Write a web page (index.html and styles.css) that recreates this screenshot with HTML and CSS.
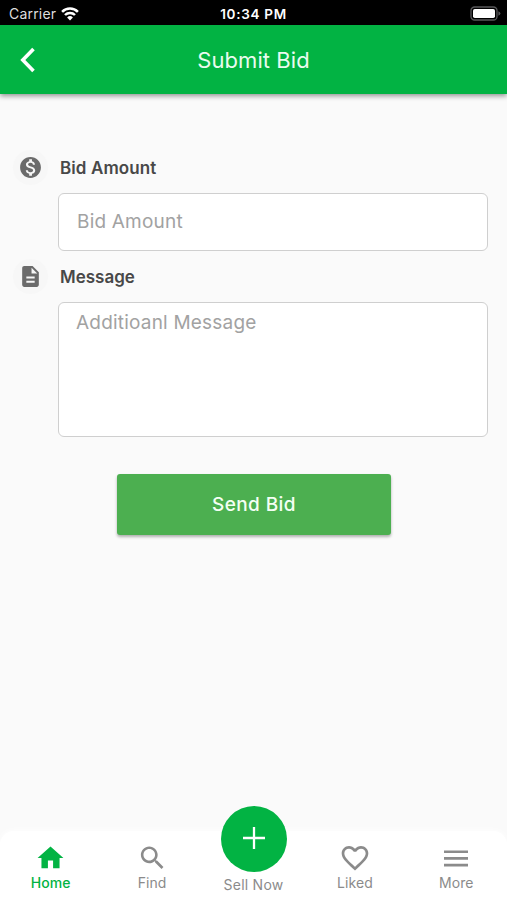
FILE: index.html
```html
<!DOCTYPE html>
<html lang="en">
<head>
<meta charset="utf-8">
<title>Submit Bid</title>
<link rel="stylesheet" href="styles.css">
</head>
<body>
<div class="status">
  <div class="carrier"><span class="carrier-name">Carrier</span>
    <svg class="wifi" viewBox="0 0 18 14" width="18" height="14"><path d="M1.1 4.900a11 11 0 0 1 15.800 0M4 8a7 7 0 0 1 10 0" fill="none" stroke="#fff" stroke-width="2.500"/><path d="M9 13.500 6.100 10.500a4.100 4.100 0 0 1 5.800 0z" fill="#fff"/></svg>
  </div>
  <span class="time">10:34 PM</span>
  <svg class="battery" viewBox="0 0 31 15" width="31" height="15"><rect x="1" y="1" width="26" height="13" rx="3.6" fill="none" stroke="#58585a" stroke-width="1.3"/><rect x="3" y="3" width="22" height="9" rx="1.8" fill="#fff"/><path d="M28.4 5.2q2 .8 2 2.3t-2 2.3z" fill="#58585a"/></svg>
</div>
<header class="appbar">
  <svg class="back" viewBox="0 0 16 26" width="16" height="26"><path d="M13.500 2 2.800 13l10.700 11" fill="none" stroke="#fff" stroke-width="3.600"/></svg>
  <h1 class="title">Submit Bid</h1>
</header>
<main class="form">
  <div class="label">
    <span class="badge"><svg viewBox="0 0 24 24" width="25" height="25"><path d="M12 2C6.48 2 2 6.48 2 12s4.48 10 10 10 10-4.480 10-10S17.520 2 12 2zm1.410 16.090V20h-2.670v-1.930c-1.710-.36-3.160-1.460-3.270-3.400h1.960c.1 1.050.82 1.870 2.650 1.870 1.960 0 2.400-.98 2.400-1.590 0-.83-.44-1.610-2.670-2.140-2.480-.6-4.180-1.620-4.180-3.670 0-1.720 1.390-2.840 3.110-3.210V4h2.670v1.950c1.860.45 2.790 1.860 2.850 3.390H14.300c-.05-1.110-.64-1.870-2.220-1.870-1.500 0-2.400.68-2.400 1.640 0 .84.65 1.390 2.670 1.910s4.180 1.390 4.180 3.910c-.01 1.830-1.380 2.830-3.120 3.160z" fill="#6b6b6b"/></svg></span>
    <span>Bid Amount</span>
  </div>
  <div class="field"><span>Bid Amount</span></div>
  <div class="label label-message">
    <span class="badge"><svg viewBox="0 0 24 24" width="25" height="25"><path d="M14 2H6c-1.100 0-1.990.9-1.990 2L4 20c0 1.100.89 2 1.990 2H18c1.100 0 2-.9 2-2V8l-6-6zm2 16H8v-2h8v2zm0-4H8v-2h8v2zm-3-5V3.500L18.500 9H13z" fill="#6b6b6b"/></svg></span>
    <span class="message-label">Message</span>
  </div>
  <div class="field area"><span>Additioanl Message</span></div>
  <div class="send"><span>Send Bid</span></div>
</main>
<nav class="tabs">
  <div class="tab active"><svg viewBox="0 0 24 24" width="31" height="31"><path d="M10 20v-6h4v6h5v-8h3L12 3 2 12h3v8z" fill="currentColor"/></svg><span>Home</span></div>
  <div class="tab"><svg viewBox="0 0 24 24" width="31" height="31"><path d="M15.500 14h-.79l-.28-.27C15.410 12.590 16 11.110 16 9.500 16 5.910 13.090 3 9.500 3S3 5.910 3 9.500 5.910 16 9.500 16c1.610 0 3.090-.59 4.230-1.570l.27.28v.79l5 4.990L20.490 19l-4.990-5zm-6 0C7.010 14 5 11.990 5 9.500S7.010 5 9.500 5 14 7.010 14 9.500 11.990 14 9.500 14z" fill="currentColor"/></svg><span>Find</span></div>
  <div class="tab sell"><div class="fab"><svg viewBox="0 0 22 22" width="22" height="22"><path d="M11 0v22M0 11h22" stroke="#fff" stroke-width="2.300"/></svg></div><span>Sell Now</span></div>
  <div class="tab"><svg viewBox="0 0 24 24" width="32" height="32"><path d="M16.500 3c-1.740 0-3.410.81-4.500 2.090C10.910 3.810 9.240 3 7.500 3 4.420 3 2 5.420 2 8.500c0 3.780 3.400 6.860 8.550 11.540L12 21.350l1.450-1.320C18.600 15.360 22 12.280 22 8.500 22 5.420 19.580 3 16.500 3zm-4.400 15.550l-.1.1-.1-.1C7.140 14.240 4 11.390 4 8.500 4 6.500 5.500 5 7.500 5c1.540 0 3.040.99 3.570 2.360h1.870C13.460 5.990 14.960 5 16.500 5c2 0 3.500 1.500 3.500 3.500 0 2.890-3.140 5.740-7.900 10.050z" fill="currentColor"/></svg><span>Liked</span></div>
  <div class="tab"><svg viewBox="0 0 24 24" width="32" height="32"><path d="M3 18.300h18v-2H3v2zm0-5h18v-2H3v2zm0-7v2h18v-2H3z" fill="currentColor"/></svg><span>More</span></div>
</nav>
</body>
</html>
```
FILE: styles.css
```css
* { box-sizing: border-box; }
body {
  margin: 0;
  width: 507px;
  height: 900px;
  overflow: hidden;
  display: flex;
  flex-direction: column;
  background: #fafafa;
  font-family: Inter, "Liberation Sans", sans-serif;
}
svg { display: block; flex: none; }
.status {
  height: 25px;
  flex: none;
  display: grid;
  grid-template-columns: 1fr auto 1fr;
  align-items: center;
  padding: 2px 6px 0 9px;
  background: #000;
  color: #fff;
  font-size: 13.5px;
}
.carrier { display: flex; align-items: center; gap: 5px; color: #dedede; }
.carrier-name { font-size: 14px; letter-spacing: .2px; }
.time { font-weight: 600; letter-spacing: .7px; margin-right: 3px; }
.battery { justify-self: end; margin-top: -1px; }
.appbar {
  height: 69px;
  flex: none;
  display: grid;
  grid-template-columns: 1fr auto 1fr;
  align-items: center;
  padding: 0 20px;
  background: #02b343;
  box-shadow: 0 2px 5px rgba(0, 0, 0, .42);
}
.title { margin: 0; color: #e9fbef; font-size: 22px; font-weight: 400; letter-spacing: .08px; line-height: 28px; }
.form {
  flex: 1;
  display: flex;
  flex-direction: column;
  padding: 56px 19px 0 13px;
}
.label {
  height: 35px;
  display: flex;
  align-items: center;
  gap: 12px;
  color: #484848;
  font-size: 17px;
  font-weight: 600;
  letter-spacing: .1px;
}
.message-label { letter-spacing: 0; }
.badge {
  width: 35px;
  height: 35px;
  border-radius: 50%;
  display: flex;
  align-items: center;
  justify-content: center;
  background: #f7f7f7;
}
.field {
  height: 58px;
  margin: 8px 0 0 45px;
  padding: 0 18px;
  display: flex;
  align-items: center;
  border: 1px solid #cfcfcf;
  border-radius: 6px;
  background: #fff;
  color: #a2a2a2;
  font-size: 19px;
  letter-spacing: .2px;
  line-height: 24px;
}
.label-message { margin-top: 8px; }
.area { height: 135px; align-items: flex-start; padding: 8px 17px; }
.send {
  width: 274px;
  height: 61px;
  margin: 37px 0 0 104px;
  display: flex;
  align-items: center;
  justify-content: center;
  border-radius: 3px;
  background: #4caf50;
  box-shadow: 0 2px 3px rgba(0, 0, 0, .3);
  color: #f4fff4;
  font-size: 19px;
  font-weight: 500;
  letter-spacing: .4px;
}
.tabs {
  height: 69px;
  flex: none;
  display: grid;
  grid-template-columns: repeat(5, 1fr);
  background: #fff;
  border-radius: 14px 14px 0 0;
  box-shadow: 0 -1px 6px rgba(255, 255, 255, .8);
}
.tab {
  display: flex;
  flex-direction: column;
  align-items: center;
  color: #8b8b8b;
  font-size: 14px;
  letter-spacing: .1px;
  line-height: 18px;
  padding-top: 11px;
}
.tab svg { height: 32px; }
.tab.active { color: #02b343; }
.active span { font-weight: 500; }
.sell { padding: 0; letter-spacing: .25px; }
.fab {
  width: 66px;
  height: 66px;
  flex: none;
  margin: -25px -1px 4px 0;
  display: flex;
  align-items: center;
  justify-content: center;
  border-radius: 50%;
  background: #02b343;
}
.fab svg { height: 22px; margin-top: -2px; }
```
